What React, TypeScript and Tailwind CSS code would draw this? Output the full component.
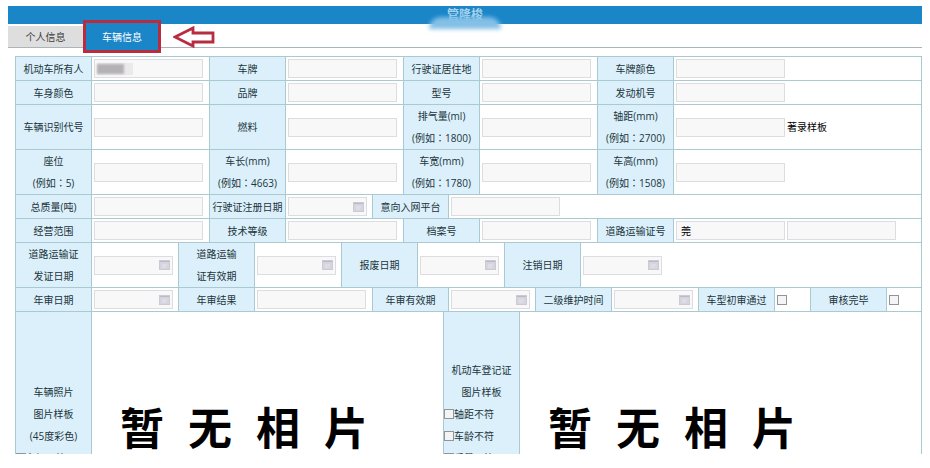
import type { ReactNode } from "react";

type FieldProps = { id: string; label: ReactNode };

function Label({ htmlFor, children }: { htmlFor?: string; children: ReactNode }) {
  return (
    <label
      htmlFor={htmlFor}
      className="w-[76px] shrink-0 flex flex-col items-center justify-center border-r border-[#a9cad0] bg-[#dbf0fb] text-center whitespace-nowrap"
    >
      {children}
    </label>
  );
}

function Cell({ className = "", children }: { className?: string; children: ReactNode }) {
  return (
    <div className={`shrink-0 flex items-center gap-[2px] pl-[2px] border-r border-[#a9cad0] ${className}`}>
      {children}
    </div>
  );
}

const inputClass = "w-[109px] h-[19px] px-1 border border-[#dddce0] bg-[#f9f8f9] text-black outline-none";

function TextField({ id, label }: FieldProps) {
  return (
    <>
      <Label htmlFor={id}>{label}</Label>
      <Cell className="w-[118px]">
        <input id={id} type="text" className={inputClass} />
      </Cell>
    </>
  );
}

function LastField({ id, label, value, children }: FieldProps & { value?: string; children?: ReactNode }) {
  return (
    <>
      <Label htmlFor={id}>{label}</Label>
      <div className="flex-1 flex items-center gap-[2px] pl-[2px]">
        <input id={id} type="text" defaultValue={value} className={inputClass} />
        {children}
      </div>
    </>
  );
}

function DateInput({ id }: { id: string }) {
  return (
    <div className="w-[79px] h-[19px] flex items-center pr-[2px] border border-[#dddce0] bg-[#f9f8f9]">
      <input id={id} type="text" className="min-w-0 flex-1 px-1 bg-transparent outline-none" />
      <svg viewBox="0 0 11 10" className="w-[11px] h-[10px]">
        <rect x="0.5" y="0.5" width="10" height="9" fill="#d6d4dd" stroke="#cdcad6" />
        <path d="M1 1.5h9" stroke="#bbb8c8" />
        <path d="M3 5h5M3 7h4" stroke="#e6e4ec" />
      </svg>
    </div>
  );
}

function DateField({ id, label }: FieldProps) {
  return (
    <>
      <Label htmlFor={id}>{label}</Label>
      <Cell className="w-[87px]">
        <DateInput id={id} />
      </Cell>
    </>
  );
}

function CheckBox({ id }: { id: string }) {
  return (
    <input
      id={id}
      type="checkbox"
      className="appearance-none w-[10px] h-[10px] shrink-0 border border-[#8e9699] bg-[#f4f4f4] checked:bg-[#1a86c8]"
    />
  );
}

function CheckLine({ id, children }: { id: string; children: ReactNode }) {
  return (
    <label htmlFor={id} className="w-full flex items-center whitespace-nowrap">
      <CheckBox id={id} />
      {children}
    </label>
  );
}

function Row({ children }: { children: ReactNode }) {
  return <div className="flex min-h-[24px] border-t border-[#a9cad0]">{children}</div>;
}

function TwoLines({ first, second }: { first: string; second: string }) {
  return (
    <>
      <span>{first}</span>
      <span>{second}</span>
    </>
  );
}

// the TC face centres the full-width colon
function Example({ name, value }: { name: string; value: string }) {
  return (
    <>
      <span>{name}</span>
      <span>
        (例如<span className="font-['Noto_Sans_CJK_TC',sans-serif]">：</span>
        {value})
      </span>
    </>
  );
}

function NoPhoto() {
  return (
    <div className="flex gap-[24px] pt-[6px] text-[44px] leading-none font-bold text-black">
      <span>暂</span>
      <span>无</span>
      <span>相</span>
      <span>片</span>
    </div>
  );
}

export default function App() {
  return (
    <div className="pt-[6px] px-[8px] bg-white font-['Open_Sans','Noto_Sans_CJK_SC',sans-serif] text-[10px] leading-[22px] text-[#22343a]">
      <header className="h-[18px] flex justify-center bg-[#1a86c8]">
        <div className="relative w-[72px] h-[23px] text-center">
          <h1 className="text-xs leading-[18px] font-bold text-[#a9d2ec]">管隆梭</h1>
          <div className="absolute inset-x-0 bottom-0 h-[12px] rounded-t-full bg-[#83bfe6] blur-[2px]" />
        </div>
      </header>

      <nav className="relative mt-[2px] flex h-[22px] border-b border-[#a9b5b8]">
        <button type="button" className="w-[75px] bg-[#dedede] text-[#3c3c3c]">
          个人信息
        </button>
        <div className="relative w-[78px]">
          <button
            type="button"
            className="absolute left-0 -top-[6px] w-[78px] h-[33px] border-[3px] border-[#b82c40] bg-[#1a86c8] text-white"
          >
            车辆信息
          </button>
        </div>
        <svg viewBox="0 0 42 22" className="ml-[12px] w-[42px] h-[22px]">
          <path d="M2 11 L20 2 V7 H40 V16 H20 V20 Z" fill="#fff" stroke="#b82c40" strokeWidth="2.8" />
        </svg>
      </nav>

      <main className="mt-[8px] ml-[7px] border-x border-[#a9cad0]">
        <Row>
          <Label htmlFor="owner">机动车所有人</Label>
          <Cell className="w-[118px] relative">
            <input id="owner" type="text" className={inputClass} />
            <div className="absolute left-[5px] top-[6px] w-[36px] h-[12px] bg-[#ebeaeb]" />
            <div className="absolute left-[5px] top-[7px] w-[27px] h-[10px] bg-[#b4b2b4] blur-[1px]" />
          </Cell>
          <TextField id="plate" label="车牌" />
          <TextField id="address" label="行驶证居住地" />
          <LastField id="plateColor" label="车牌颜色" />
        </Row>
        <Row>
          <TextField id="bodyColor" label="车身颜色" />
          <TextField id="brand" label="品牌" />
          <TextField id="model" label="型号" />
          <LastField id="engine" label="发动机号" />
        </Row>
        <Row>
          <TextField id="vin" label="车辆识别代号" />
          <TextField id="fuel" label="燃料" />
          <TextField id="displacement" label={<Example name="排气量(ml)" value="1800" />} />
          <LastField id="wheelbase" label={<Example name="轴距(mm)" value="2700" />}>
            <span className="text-black">著录样板</span>
          </LastField>
        </Row>
        <Row>
          <TextField id="seats" label={<Example name="座位" value="5" />} />
          <TextField id="length" label={<Example name="车长(mm)" value="4663" />} />
          <TextField id="width" label={<Example name="车宽(mm)" value="1780" />} />
          <LastField id="height" label={<Example name="车高(mm)" value="1508" />} />
        </Row>
        <Row>
          <TextField id="weight" label="总质量(吨)" />
          <DateField id="registered" label="行驶证注册日期" />
          <LastField id="platform" label="意向入网平台" />
        </Row>
        <Row>
          <TextField id="scope" label="经营范围" />
          <TextField id="grade" label="技术等级" />
          <TextField id="archive" label="档案号" />
          <LastField id="permit" label="道路运输证号" value="莞">
            <input type="text" aria-label="道路运输证号" className={inputClass} />
          </LastField>
        </Row>
        <Row>
          <DateField id="issued" label={<TwoLines first="道路运输证" second="发证日期" />} />
          <DateField id="validity" label={<TwoLines first="道路运输" second="证有效期" />} />
          <DateField id="scrapped" label="报废日期" />
          <Label htmlFor="cancelled">注销日期</Label>
          <div className="flex-1 flex items-center pl-[2px]">
            <DateInput id="cancelled" />
          </div>
        </Row>
        <Row>
          <DateField id="reviewDate" label="年审日期" />
          <TextField id="reviewResult" label="年审结果" />
          <DateField id="reviewValidity" label="年审有效期" />
          <DateField id="maintenance" label="二级维护时间" />
          <Label htmlFor="firstReview">车型初审通过</Label>
          <Cell className="w-[36px]">
            <CheckBox id="firstReview" />
          </Cell>
          <Label htmlFor="reviewDone">审核完毕</Label>
          <div className="flex-1 flex items-center pl-[2px]">
            <CheckBox id="reviewDone" />
          </div>
        </Row>

        {/* photo row is taller than the visible part of the form */}
        <div className="h-[143px] overflow-hidden">
          <div className="h-[226px] flex border-t border-[#a9cad0]">
            <div className="w-[76px] shrink-0 flex flex-col items-center justify-center border-r border-[#a9cad0] bg-[#dbf0fb]">
              <span>车辆照片</span>
              <span>图片样板</span>
              <span>(45度彩色)</span>
              <CheckLine id="photoMismatch">车辆不符</CheckLine>
            </div>
            <div className="w-[352px] shrink-0 flex items-center pl-[28px] border-r border-[#a9cad0]">
              <NoPhoto />
            </div>
            <div className="w-[76px] shrink-0 flex flex-col items-center justify-center pb-[22px] border-r border-[#a9cad0] bg-[#dbf0fb]">
              <span>机动车登记证</span>
              <span>图片样板</span>
              <CheckLine id="wheelbaseMismatch">轴距不符</CheckLine>
              <CheckLine id="ageMismatch">车龄不符</CheckLine>
              <CheckLine id="weightMismatch">质量不符</CheckLine>
            </div>
            <div className="flex-1 flex items-center pl-[28px]">
              <NoPhoto />
            </div>
          </div>
        </div>
      </main>
    </div>
  );
}
